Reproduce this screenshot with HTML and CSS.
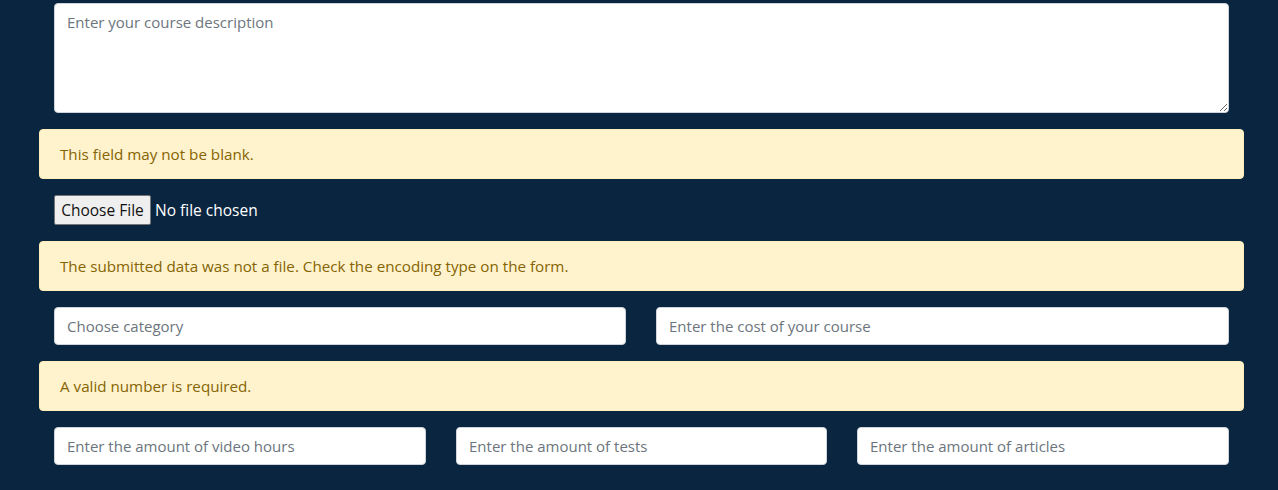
FILE: index.html
```html
<!DOCTYPE html>
<html lang="en">
<head>
<meta charset="utf-8">
<title>Course form</title>
<link rel="stylesheet" href="styles.css">
</head>
<body>
<form class="course-form">
  <div class="form-group">
    <textarea class="form-control description" placeholder="Enter your course description"></textarea>
  </div>
  <div class="alert">This field may not be blank.</div>
  <div class="form-group">
    <input type="file" class="file-input">
  </div>
  <div class="alert">The submitted data was not a file. Check the encoding type on the form.</div>
  <div class="form-group row two">
    <input type="text" class="form-control" placeholder="Choose category">
    <input type="text" class="form-control" placeholder="Enter the cost of your course">
  </div>
  <div class="alert">A valid number is required.</div>
  <div class="form-group row three">
    <input type="text" class="form-control" placeholder="Enter the amount of video hours">
    <input type="text" class="form-control" placeholder="Enter the amount of tests">
    <input type="text" class="form-control" placeholder="Enter the amount of articles">
  </div>
</form>
</body>
</html>
```
FILE: styles.css
```css
html, body {
  margin: 0;
  padding: 0;
  background: #0a2540;
  height: 100%;
  overflow: hidden;
}
body {
  font-family: "Open Sans", "Noto Sans", sans-serif;
  font-size: 15.2px;
}
.course-form {
  width: 1205px;
  margin-left: 39px;
  padding-top: 3px;
}
.form-group {
  padding: 0 15px;
  margin-bottom: 16px;
}
.form-control {
  box-sizing: border-box;
  display: block;
  width: 100%;
  height: 38px;
  padding: 6px 12px;
  font-family: inherit;
  font-size: 15px;
  color: #495057;
  background: #fff;
  border: 1px solid #ced4da;
  border-radius: 4px;
  outline: none;
}
.form-control::placeholder {
  color: #6c757d;
}
.description {
  height: 110px;
  resize: vertical;
  padding-top: 8px;
}
.alert {
  box-sizing: border-box;
  height: 50px;
  padding: 12px 20px;
  margin-bottom: 16px;
  line-height: 24px;
  background: #fff3cd;
  color: #856404;
  border: 1px solid #ffeeba;
  border-radius: 4px;
}
.file-input {
  display: block;
  height: 30px;
  padding: 0;
  color: #fff;
  font-family: inherit;
  font-size: 15.5px;
}
.file-input::file-selector-button {
  box-sizing: border-box;
  height: 30px;
  width: 97px;
  padding: 0 4px;
  margin-right: 4px;
  font-family: inherit;
  font-size: 15.5px;
  color: #111;
  background: #efefef;
  border: 1px solid #767676;
  border-radius: 2px;
}
.row {
  display: grid;
  column-gap: 30px;
}
.row.two { grid-template-columns: 572px 573px; }
.row.three { grid-template-columns: 372px 371px 372px; }
```
